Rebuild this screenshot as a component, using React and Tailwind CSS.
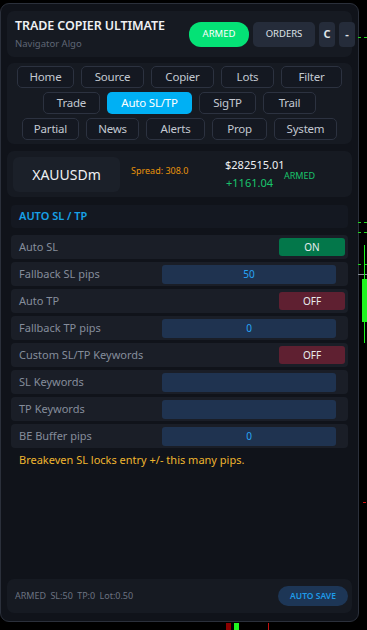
import React from "react";

// Tabs, row by row, with the widths seen in the panel
const TAB_ROWS = [
  [["Home", 57], ["Source", 63], ["Copier", 63], ["Lots", 53], ["Filter", 61]],
  [["Trade", 57], ["Auto SL/TP", 85], ["SigTP", 57], ["Trail", 53]],
  [["Partial", 57], ["News", 53], ["Alerts", 59], ["Prop", 55], ["System", 63]],
];

const ROWS = [
  { label: "Auto SL", kind: "toggle", on: true },
  { label: "Fallback SL pips", kind: "input", value: "50" },
  { label: "Auto TP", kind: "toggle", on: false },
  { label: "Fallback TP pips", kind: "input", value: "0" },
  { label: "Custom SL/TP Keywords", kind: "toggle", on: false },
  { label: "SL Keywords", kind: "input", value: "" },
  { label: "TP Keywords", kind: "input", value: "" },
  { label: "BE Buffer pips", kind: "input", value: "0" },
];

function Tab({ label, width, active }) {
  return (
    <div
      style={{ width }}
      className={
        "h-[22px] rounded-[5px] flex items-center justify-center text-[11.5px] tracking-[-0.2px] " +
        (active
          ? "bg-[#00b0f4] text-white"
          : "bg-[#141821] border border-[#2c3240] text-[#c3c8d1]")
      }
    >
      {label}
    </div>
  );
}

function SettingRow({ row }) {
  return (
    <div className="h-[24px] rounded-[4px] bg-[#1a1e27] flex items-center pl-[8px] pr-[3px]">
      <span className="text-[11px] text-[#858d9b] flex-1">{row.label}</span>
      {row.kind === "toggle" ? (
        <div
          className={
            "w-[66px] h-[18px] rounded-[3px] flex items-center justify-center text-[10px] text-[#e8ecef] " +
            (row.on ? "bg-[#03774a]" : "bg-[#5f2031]")
          }
        >
          {row.on ? "ON" : "OFF"}
        </div>
      ) : (
        <div className="w-[174px] h-[19px] mr-[9px] rounded-[3px] bg-[#1f3350] flex items-center justify-center text-[10px] text-[#27a4f5]">
          {row.value}
        </div>
      )}
    </div>
  );
}

export default function App() {
  return (
    <div className="relative w-[367px] h-[630px] bg-black overflow-hidden [font-family:'Noto_Sans',sans-serif]">
      {/* chart bits beside the panel */}
      <div className="absolute left-[358px] top-[37px] w-[9px] border-t border-dashed border-[#22d622]" />
      <div className="absolute left-[358px] top-[222px] w-[9px] border-t border-dashed border-[#22d622]" />
      <div className="absolute left-[358px] top-[232px] w-[9px] border-t border-dashed border-[#22d622]" />
      <div className="absolute left-[358px] top-[264px] w-[9px] border-t border-dashed border-[#22d622]" />
      <div className="absolute left-[358px] top-[274px] w-[9px] h-[1px] bg-[#8a8f98]" />
      <div className="absolute left-[364px] top-[245px] w-[1px] h-[98px] bg-[#1ff51f]" />
      <div className="absolute left-[362px] top-[279px] w-[5px] h-[43px] bg-[#1ff51f]" />
      <div className="absolute left-[363px] top-[502px] w-[3px] h-[1px] bg-[#d01010]" />
      <div className="absolute left-[226px] top-[623px] w-[5px] h-[7px] bg-[#8b0000]" />
      <div className="absolute left-[234px] top-[623px] w-[5px] h-[7px] bg-[#1ff51f]" />
      <div className="absolute left-[268px] top-[623px] w-[1px] h-[7px] bg-[#c01010]" />

      {/* panel */}
      <div className="mt-[3px] w-[359px] h-[619px] rounded-[9px] border border-[#2b303b] bg-[#10131a] flex flex-col px-[6px]">
        {/* header */}
        <div className="mt-[7px] h-[46px] rounded-[7px] bg-[#161a22] flex items-center pl-[8px]">
          <div className="flex-1 flex flex-col">
            <span className="text-[12.5px] font-semibold text-[#eef0f3] leading-[16px] tracking-[-0.1px]">TRADE COPIER ULTIMATE</span>
            <span className="text-[9.5px] text-[#5f6675] leading-[14px] mt-[3px]">Navigator Algo</span>
          </div>
          <div className="flex items-center gap-[4px] -mr-[3px]">
            <div className="w-[60px] h-[25px] rounded-[12px] bg-[#04e276] flex items-center justify-center text-[9.5px] text-white">ARMED</div>
            <div className="w-[62px] h-[25px] rounded-[5px] bg-[#252c3a] flex items-center justify-center text-[9.5px] text-[#dfe3e8]">ORDERS</div>
            <div className="w-[16px] h-[25px] rounded-[4px] bg-[#252c3a] flex items-center justify-center text-[11px] font-bold text-[#dfe3e8]">C</div>
            <div className="w-[16px] h-[25px] rounded-[4px] bg-[#252c3a] flex items-center justify-center text-[11px] font-bold text-[#dfe3e8]">-</div>
          </div>
        </div>

        {/* tabs */}
        <div className="mt-[6px] h-[81px] rounded-[7px] bg-[#161a22] flex flex-col items-center pt-[3px] gap-[4px]">
          {TAB_ROWS.map((row, i) => (
            <div key={i} className="flex gap-[7px]">
              {row.map(([label, w]) => (
                <Tab key={label} label={label} width={w} active={label === "Auto SL/TP"} />
              ))}
            </div>
          ))}
        </div>

        {/* symbol bar */}
        <div className="mt-[7px] h-[46px] rounded-[7px] bg-[#161a22] flex items-center pl-[6px]">
          <div className="w-[107px] h-[35px] rounded-[6px] bg-[#1b2029] flex items-center justify-center text-[14px] text-[#eef0f3]">XAUUSDm</div>
          <span className="ml-[11px] w-[94px] text-[9px] text-[#e8930a] -mt-[6px]">Spread: 308.0</span>
          <div className="flex flex-col w-[59px]">
            <span className="text-[11px] text-[#eef0f3] leading-[16px]">$282515.01</span>
            <span className="text-[11px] text-[#19c46c] leading-[16px] mt-[2px] ml-[1px]">+1161.04</span>
          </div>
          <span className="text-[9px] text-[#19c46c] mt-[4px]">ARMED</span>
        </div>

        {/* section */}
        <div className="mx-[4px] mt-[8px] h-[23px] rounded-[4px] bg-[#141821] flex items-center pl-[8px]">
          <span className="text-[11px] font-semibold text-[#17a2e8]">AUTO SL / TP</span>
        </div>
        <div className="mx-[4px] mt-[7px] flex flex-col gap-[3px]">
          {ROWS.map((row) => (
            <SettingRow key={row.label} row={row} />
          ))}
        </div>
        <div className="mx-[4px] mt-[4px] pl-[8px] text-[11px] text-[#efb52f]">Breakeven SL locks entry +/- this many pips.</div>

        {/* footer */}
        <div className="mt-auto mb-[8px] h-[34px] rounded-[7px] bg-[#161a22] flex items-center pl-[8px] pr-[4px]">
          <span className="flex-1 text-[9px] text-[#6c7381] [word-spacing:2px]">ARMED SL:50 TP:0 Lot:0.50</span>
          <div className="w-[70px] h-[20px] rounded-[10px] bg-[#1d3656] flex items-center justify-center text-[8.5px] font-semibold text-[#1e9ae8]">AUTO SAVE</div>
        </div>
      </div>
    </div>
  );
}
